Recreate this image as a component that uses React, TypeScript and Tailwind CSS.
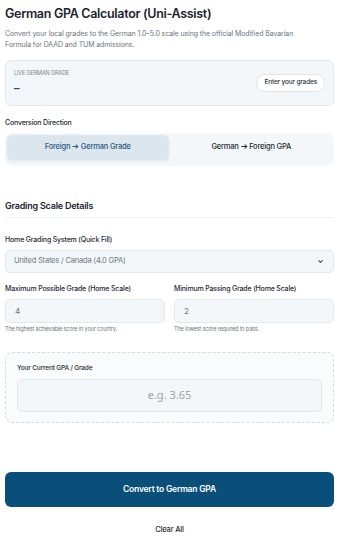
import React, { useState } from "react";

const font = { fontFamily: "Inter, 'Noto Sans', sans-serif" };

const Field = ({ label, value, help }: { label: string; value: string; help: string }) => (
    <div className="flex flex-col">
        <label className="text-[7px] font-medium text-[#1f2a33] tracking-tight leading-none">{label}</label>
        <div className="mt-[7px] h-[24px] rounded-[5px] border border-[#e3e8ec] bg-[#f4f7f9] flex items-center px-[9px] text-[8px] text-[#6b7680]">
            {value}
        </div>
        <p className="mt-[4px] text-[5.5px] text-[#6b7680] tracking-tight leading-none">{help}</p>
    </div>
);

const App = () => {
    const [direction, setDirection] = useState("foreign");

    return (
        <div className="w-[348px] h-[545px] bg-white pl-[5px] pr-[14px] pt-[8px]" style={font}>
            <h1 className="text-[12.5px] font-semibold text-[#1c252c] tracking-tight leading-none">
                German GPA Calculator (Uni-Assist)
            </h1>
            <p className="mt-[7px] text-[7px] leading-[11px] text-[#6b7680] tracking-[-0.1px] pr-[14px]">
                Convert your local grades to the German 1.0–5.0 scale using the official Modified Bavarian Formula for DAAD and TUM admissions.
            </p>

            {/* live grade */}
            <div className="mt-[10px] h-[46px] rounded-[6px] border border-[#e5e9ec] bg-[#f4f7f9] flex items-center justify-between pl-[8px] pr-[8px]">
                <div className="flex flex-col">
                    <span className="text-[5.5px] uppercase text-[#7a848c] tracking-tight leading-none">Live German Grade</span>
                    <span className="mt-[6px] text-[11px] font-semibold text-[#0a4f7a] leading-none">–</span>
                </div>
                <button type="button" className="h-[18px] px-[7px] rounded-full bg-white border border-[#e2e7eb] text-[6.5px] font-medium text-[#2a343c] tracking-tight">
                    Enter your grades
                </button>
            </div>

            {/* direction */}
            <div className="mt-[13px] text-[7px] font-medium text-[#1f2a33] tracking-tight leading-none">Conversion Direction</div>
            <div className="mt-[7px] h-[33px] rounded-[6px] bg-[#f5f8fa] p-[2px] grid grid-cols-2 gap-[2px]">
                <button
                    type="button"
                    onClick={() => setDirection("foreign")}
                    className={`h-[25px] rounded-[5px] text-[7.5px] font-medium tracking-tight ${direction === "foreign" ? "bg-[#dbe6ee] text-[#2b5b80] shadow-[0_2px_4px_rgba(0,0,0,0.06)]" : "text-[#1f2a33]"}`}
                >
                    Foreign ➔ German Grade
                </button>
                <button
                    type="button"
                    onClick={() => setDirection("german")}
                    className={`h-[25px] rounded-[5px] text-[7.5px] font-medium tracking-tight ${direction === "german" ? "bg-[#dbe6ee] text-[#2b5b80] shadow-[0_2px_4px_rgba(0,0,0,0.06)]" : "text-[#1f2a33]"}`}
                >
                    German ➔ Foreign GPA
                </button>
            </div>

            {/* grading scale */}
            <h2 className="mt-[35px] text-[9px] font-semibold text-[#1c252c] tracking-tight leading-none">Grading Scale Details</h2>
            <div className="mt-[7px] h-px bg-[#eef1f3]" />

            <label className="block mt-[18px] text-[7px] font-medium text-[#1f2a33] tracking-tight leading-none">Home Grading System (Quick Fill)</label>
            <div className="mt-[7px] h-[23px] rounded-[5px] border border-[#e3e8ec] bg-[#f4f7f9] flex items-center justify-between pl-[8px] pr-[9px] text-[7.5px] text-[#6b7680] tracking-tight">
                <span>United States / Canada (4.0 GPA)</span>
                <svg width="7" height="7" viewBox="0 0 24 24" fill="none" stroke="#3a444c" strokeWidth="3.5" strokeLinecap="round" strokeLinejoin="round">
                    <path d="M6 9l6 6 6-6" />
                </svg>
            </div>

            <div className="mt-[12px] grid grid-cols-2 gap-[9px]">
                <Field label="Maximum Possible Grade (Home Scale)" value="4" help="The highest achievable score in your country." />
                <Field label="Minimum Passing Grade (Home Scale)" value="2" help="The lowest score required to pass." />
            </div>

            {/* current gpa */}
            <div className="mt-[20px] rounded-[7px] border border-dashed border-[#d6dce1] bg-[#fafbfc] px-[11px] pt-[12px] pb-[10px]">
                <label className="block text-[6.5px] font-medium text-[#1f2a33] tracking-tight leading-none">Your Current GPA / Grade</label>
                <div className="mt-[7px] h-[33px] rounded-[5px] border border-[#e3e8ec] bg-[#f4f7f9] flex items-center justify-center text-[11px] text-[#9aa3aa]" style={{ fontFamily: "'Noto Sans', sans-serif" }}>
                    e.g. 3.65
                </div>
            </div>

            <button type="button" className="mt-[49px] w-full h-[35px] rounded-[6px] bg-[#0a4f7a] text-white text-[8.5px] font-semibold tracking-tight">
                Convert to German GPA
            </button>
            <div className="mt-[17px] text-center text-[7.5px] font-medium text-[#1f2a33] tracking-tight">Clear All</div>
        </div>
    );
};

export default App;
